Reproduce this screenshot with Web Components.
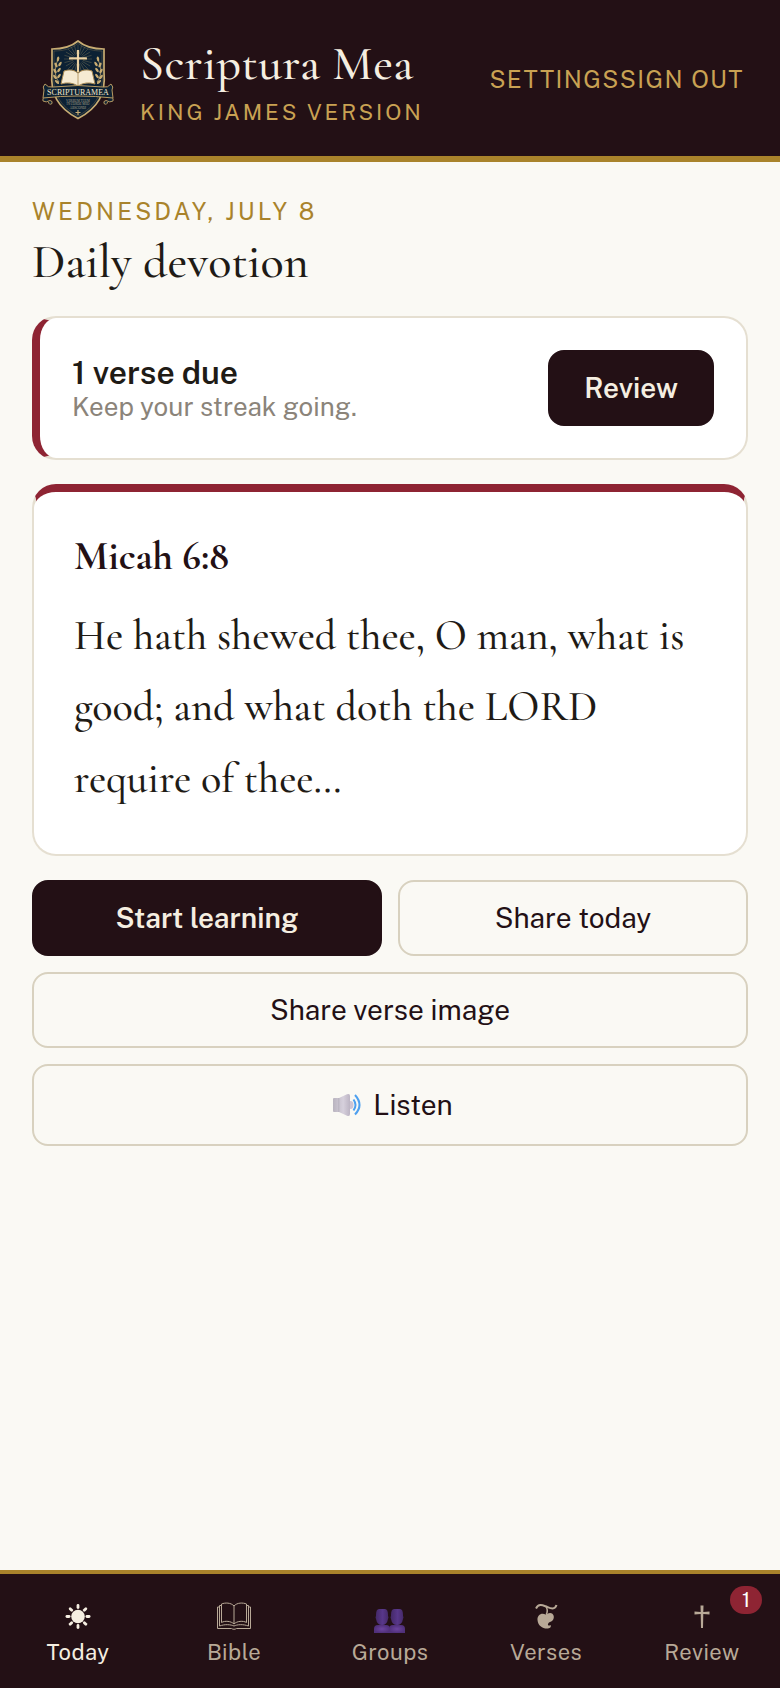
<!DOCTYPE html>
<html lang="en">
<head>
<meta charset="utf-8">
<meta name="viewport" content="width=device-width, initial-scale=1">
<title>Scriptura Mea</title>
<style>
	:root {
		--ink: #231015;
		--text: #1f1b16;
		--cream: #f5eee1;
		--paper: #faf9f4;
		--gold: #a9832b;
		--gold-light: #c9a253;
		--wine: #8e2433;
		--line: #e5dfd1;
		--line-strong: #d8d1bf;
		--muted: #8b847a;
		--tab: #b8a997;
		--serif: "Cormorant Garamond", "Liberation Serif", serif;
		--sans: "Public Sans", Inter, "Liberation Sans", sans-serif;
	}

	body {
		margin: 0;
		background: var(--paper);
		color: var(--text);
		font: 28px/32px var(--sans);
	}
</style>
</head>
<body>
<sm-app>
	<sm-header slot="header" name="Scriptura Mea" edition="King James Version">
		<sm-crest slot="logo"></sm-crest>
		<sm-link href="#settings">Settings</sm-link>
		<sm-link href="#sign-out">Sign out</sm-link>
	</sm-header>

	<sm-heading date="Wednesday, July 8">Daily devotion</sm-heading>

	<sm-due>
		<span slot="title">1 verse due</span>
		<span slot="hint">Keep your streak going.</span>
		<sm-button slot="action" primary>Review</sm-button>
	</sm-due>

	<sm-verse reference="Micah 6:8">He hath shewed thee, O man, what is good; and what doth the LORD require of thee…</sm-verse>

	<sm-actions>
		<sm-button primary>Start learning</sm-button>
		<sm-button>Share today</sm-button>
		<sm-button wide>Share verse image</sm-button>
		<sm-button wide icon="speaker">Listen</sm-button>
	</sm-actions>

	<sm-tabs slot="tabs">
		<sm-tab icon="sun" href="#today" current>Today</sm-tab>
		<sm-tab icon="book" href="#bible">Bible</sm-tab>
		<sm-tab icon="people" href="#groups">Groups</sm-tab>
		<sm-tab icon="heart" href="#verses">Verses</sm-tab>
		<sm-tab icon="dagger" href="#review" badge="1">Review</sm-tab>
	</sm-tabs>
</sm-app>

<script>
const branch =
	'<path d="M29 52C24 46 24 36 29 28" fill="none" stroke="#c8ac72" stroke-width=".8"/>' +
	[[28, 29, 10], [26, 35, -28], [30, 34, 32], [25, 41, -32], [29, 40, 36], [25, 47, -38], [29, 46, 38], [27, 52, -50]]
		.map(([x, y, r]) => `<ellipse cx="${x}" cy="${y}" rx="1.2" ry="2.6" fill="#c8ac72" transform="rotate(${r} ${x} ${y})"/>`)
		.join('');

const rays = new Array(24).fill()
	.map((_, i) => `<path d="M48 24V15" transform="rotate(${i * 15} 48 29)"/>`)
	.join('');

const crest =
	'<svg viewBox="2 2 92 92" role="img" aria-label="Scriptura Mea crest">' +
		'<path d="M48 11C41 17 32 19 22 19V42C20 64 28 78 48 88.500C68 78 76 64 74 42V19C64 19 55 17 48 11Z" fill="#0c2134" stroke="#c8ac72" stroke-width="1.700"/>' +
		'<path d="M48 13.500C41 19 33 21 24 21V42C22 63 30 76 48 86C66 76 74 63 72 42V21C63 21 55 19 48 13.500Z" fill="none" stroke="#6c6148" stroke-width=".5"/>' +
		`<g stroke="#66654f" stroke-width=".5">${rays}</g>` +
		branch +
		`<g transform="matrix(-1 0 0 1 96 0)">${branch}</g>` +
		'<path d="M31 54L34 41Q42 38 48 43Q54 38 62 41L65 54Q56 51 48 56Q40 51 31 54Z" fill="#f5ead2" stroke="#a98a52" stroke-width="1"/>' +
		'<path d="M48 43V55" stroke="#a98a52" stroke-width=".8"/>' +
		'<path d="M48 20V42M39 28.500H57" stroke="#e2c48c" stroke-width="2.200"/>' +
		'<path d="M48 20V42M39.500 28H56.500" stroke="#fbe9c4" stroke-width=".8"/>' +
		'<path d="M18 67Q12 66 13 71Q16 73 20 70.500Q23 71 22 73.500Q19 75.500 18.500 72M78 67Q84 66 83 71Q80 73 76 70.500Q73 71 74 73.500Q77 75.500 77.500 72" fill="#0c2134" stroke="#b79a62" stroke-width="1"/>' +
		'<path d="M15 54Q12 57 14 60L13 68Q48 64 83 68L82 60Q84 57 81 54Q78 58 73 57Q48 54 23 57Q18 58 15 54Z" fill="#0e2233" stroke="#b79a62" stroke-width="1"/>' +
		'<g fill="#f3e6cc" font-family="Liberation Serif, serif" text-anchor="middle">' +
			'<text x="48" y="64.500" font-size="8">SCRIPTURAMEA</text>' +
			'<g fill="#a9a189" font-size="3.200">' +
				'<text x="48" y="71.500">VERBUM TUUM</text>' +
				'<text x="48" y="75">IN CORDE MEO</text>' +
				'<text x="48" y="78.500">ABSCONDI</text>' +
			'</g>' +
		'</g>' +
		'<path d="M48 80V85M45.500 82.500H50.500" stroke="#c8ac72" stroke-width="1.200"/>' +
	'</svg>';

const person = x =>
	`<g transform="translate(${x} 0)">` +
		'<path d="M0 35V31Q0 27 4 27H12Q16 27 16 31V35Z" fill="url(#body)"/>' +
		'<path d="M2 17Q2 11 5 11H11Q14 11 14 17V18Q15 19 14 21Q13 27 8 27Q3 27 2 21Q1 19 2 18Z" fill="url(#face)"/>' +
	'</g>';

const icons = {
	sun:
		'<circle cx="18" cy="18.500" r="6.800" fill="currentColor"/>' +
		'<g stroke="currentColor" stroke-width="2.800" stroke-linecap="round">' +
			new Array(8).fill().map((_, i) => `<path d="M18 9.600V7.400" transform="rotate(${i * 45} 18 18.500)"/>`).join('') +
		'</g>',
	book:
		'<g fill="none" stroke="currentColor" stroke-width="1">' +
			'<path d="M18 8C15 4.500 9 4.500 5.500 6V24.500C9 22.500 15 23 18 26C21 23 27 22.500 30.500 24.500V6C27 4.500 21 4.500 18 8V26"/>' +
			'<path d="M5.500 7.500H3.500V28C9 26 15 26.500 18 28C21 26.500 27 26 32.500 28V7.500H30.500"/>' +
			'<path d="M3.500 9H1.500V30.500H15.500C17 31.500 19 31.500 20.500 30.500H34.500V9H32.500"/>' +
		'</g>',
	people:
		'<defs>' +
			'<linearGradient id="face"><stop stop-color="#432866"/><stop offset=".55" stop-color="#58378a"/><stop offset="1" stop-color="#452968"/></linearGradient>' +
			'<radialGradient id="body"><stop stop-color="#6d44a0"/><stop offset="1" stop-color="#50307a"/></radialGradient>' +
		'</defs>' +
		person(2) + person(17),
	heart:
		'<path d="M18 17C14 14 9 17 9.500 22C10 28 15 31 20 30.500C22.500 30 23.500 28.500 22.500 27C21 28 19.500 27.500 20 26C20.500 24 23 24 24.500 22.500C27 20 26 15 22 15Q19.500 15 18 17Z" fill="currentColor"/>' +
		'<path d="M8 10.500C11 5 15 7.500 19 8.800C23 10.500 27 12 28.500 7" fill="none" stroke="currentColor" stroke-width="2"/>' +
		'<path d="M18 8.500Q20.500 13 18 17" fill="none" stroke="currentColor" stroke-width="1.500"/>',
	dagger:
		'<path d="M16.500 7.500H19.500L19.300 14L25.500 13.500V16.500L19.300 16L19 30H17L16.700 16L10.500 16.500V13.500L16.700 14Z" fill="currentColor"/>',
	speaker:
		'<defs><linearGradient id="cone"><stop stop-color="#b9b4bf"/><stop offset=".6" stop-color="#d6d0dc"/><stop offset="1" stop-color="#bcb4c3"/></linearGradient></defs>' +
		'<ellipse cx="17.500" cy="19" rx="3" ry="4" fill="#cec5d5"/>' +
		'<path d="M0 13Q0 12 1 12H6L14 8.300Q17 7 17 10V28Q17 31 14 29.700L6 26H1Q0 26 0 25Z" fill="url(#cone)"/>' +
		'<path d="M5.800 12V26" stroke="#b3adb9" stroke-width=".8"/>' +
		'<path d="M20.500 13.500Q24.500 19 20.500 24.500M22 9Q31 19 22 28.500" fill="none" stroke="#4ea0ef" stroke-width="2"/>'
};

const define = (tagName, css, render) => customElements.define(tagName, class extends HTMLElement {
	constructor() {
		super();
		this.attachShadow({mode: 'open'});
	}

	connectedCallback() {
		this.shadowRoot.innerHTML = `<style>*{box-sizing:border-box}${css}</style>${render(this)}`;
	}
});

define('sm-app', `
	:host {
		display: flex;
		flex-direction: column;
		min-height: 100vh;
	}
	main {
		flex: 1;
		display: flex;
		flex-direction: column;
		gap: 24px;
		padding: 32px;
	}
	.tabs {
		position: sticky;
		bottom: 0;
	}
`, () => `
	<slot name="header"></slot>
	<main><slot></slot></main>
	<div class="tabs"><slot name="tabs"></slot></div>
`);

define('sm-crest', `
	:host { display: block; flex: none; }
	svg { display: block; width: 92px; height: 92px; }
`, () => crest);

define('sm-header', `
	:host { display: block; }
	header {
		display: flex;
		align-items: center;
		gap: 16px;
		padding: 30px 32px;
		border-bottom: 6px solid var(--gold);
		background: var(--ink);
	}
	.brand { flex: 1; }
	.name {
		color: var(--cream);
		font: 500 48px/68px var(--serif);
		letter-spacing: .01em;
	}
	.edition {
		color: var(--gold-light);
		font-size: 22px;
		line-height: 28px;
		letter-spacing: .13em;
		text-transform: uppercase;
	}
	nav {
		display: flex;
		padding-right: 4px;
	}
`, host => `
	<header>
		<slot name="logo"></slot>
		<div class="brand">
			<div class="name">${host.getAttribute('name')}</div>
			<div class="edition">${host.getAttribute('edition')}</div>
		</div>
		<nav aria-label="Account"><slot></slot></nav>
	</header>
`);

define('sm-link', `
	:host { display: block; }
	a {
		color: var(--gold-light);
		font-size: 24px;
		letter-spacing: .06em;
		text-decoration: none;
		text-transform: uppercase;
		white-space: nowrap;
	}
`, host => `<a href="${host.getAttribute('href')}"><slot></slot></a>`);

define('sm-heading', `
	:host { display: block; }
	p {
		margin: 0 0 4px;
		color: var(--gold);
		font-size: 24px;
		line-height: 34px;
		letter-spacing: .13em;
		text-transform: uppercase;
	}
	h1 {
		margin: 0;
		font: 500 48px/60px var(--serif);
	}
`, host => `
	<p>${host.getAttribute('date')}</p>
	<h1><slot></slot></h1>
`);

define('sm-due', `
	:host {
		display: flex;
		align-items: center;
		justify-content: space-between;
		gap: 16px;
		box-sizing: border-box;
		padding: 32px;
		border: 2px solid var(--line);
		border-left: 8px solid var(--wine);
		border-radius: 24px;
		background: #fff;
	}
	.title {
		font-size: 32px;
		font-weight: 600;
		line-height: 38px;
	}
	.hint {
		color: var(--muted);
		font-size: 26px;
		line-height: 30px;
	}
`, () => `
	<div>
		<div class="title"><slot name="title"></slot></div>
		<div class="hint"><slot name="hint"></slot></div>
	</div>
	<slot name="action"></slot>
`);

define('sm-verse', `
	:host {
		display: block;
		box-sizing: border-box;
		padding: 40px;
		border: 2px solid var(--line);
		border-top: 8px solid var(--wine);
		border-radius: 24px;
		background: #fff;
	}
	h2 {
		margin: 0 0 20px;
		color: var(--ink);
		font: 700 40px/48px var(--serif);
	}
	blockquote {
		margin: 0;
		font: 500 42px/1.7 var(--serif);
	}
`, host => `
	<h2>${host.getAttribute('reference')}</h2>
	<blockquote><slot></slot></blockquote>
`);

define('sm-actions', `
	:host {
		display: grid;
		grid-template-columns: 1fr 1fr;
		gap: 16px;
	}
	::slotted([wide]) { grid-column: 1 / -1; }
`, () => '<slot></slot>');

define('sm-button', `
	:host { display: block; }
	button {
		display: flex;
		align-items: center;
		justify-content: center;
		gap: 12px;
		width: 100%;
		padding: 20px 34px;
		border: 2px solid var(--line-strong);
		border-radius: 16px;
		background: transparent;
		color: var(--ink);
		font: inherit;
		cursor: pointer;
	}
	:host([primary]) button {
		border-color: var(--ink);
		background: var(--ink);
		color: var(--cream);
		font-weight: 600;
	}
	svg { width: 34px; height: 38px; }
`, host => {
	const icon = host.getAttribute('icon');
	return '<button type="button">' +
		(icon ? `<svg viewBox="-6 0 34 38" aria-hidden="true">${icons[icon]}</svg>` : '') +
		'<span><slot></slot></span>' +
	'</button>';
});

define('sm-tabs', `
	:host { display: block; }
	nav {
		display: grid;
		grid-auto-flow: column;
		grid-auto-columns: 1fr;
		border-top: 4px solid var(--gold);
		background: var(--ink);
	}
`, () => '<nav aria-label="Main"><slot></slot></nav>');

define('sm-tab', `
	:host { display: block; }
	a {
		position: relative;
		display: flex;
		flex-direction: column;
		align-items: center;
		gap: 4px;
		padding: 24px 0 22px;
		color: var(--tab);
		font-size: 22px;
		line-height: 28px;
		letter-spacing: .02em;
		text-decoration: none;
	}
	:host([current]) a { color: var(--cream); }
	svg { width: 36px; height: 36px; }
	.badge {
		position: absolute;
		top: 12px;
		right: 18px;
		width: 32px;
		border-radius: 14px;
		background: var(--wine);
		color: #fff;
		font-size: 20px;
		letter-spacing: 0;
		text-align: center;
	}
`, host => {
	const badge = host.getAttribute('badge');
	return `<a href="${host.getAttribute('href')}"${host.hasAttribute('current') ? ' aria-current="page"' : ''}>` +
		`<svg viewBox="0 0 36 36" aria-hidden="true">${icons[host.getAttribute('icon')]}</svg>` +
		'<span><slot></slot></span>' +
		(badge ? `<span class="badge">${badge}</span>` : '') +
	'</a>';
});
</script>
</body>
</html>
